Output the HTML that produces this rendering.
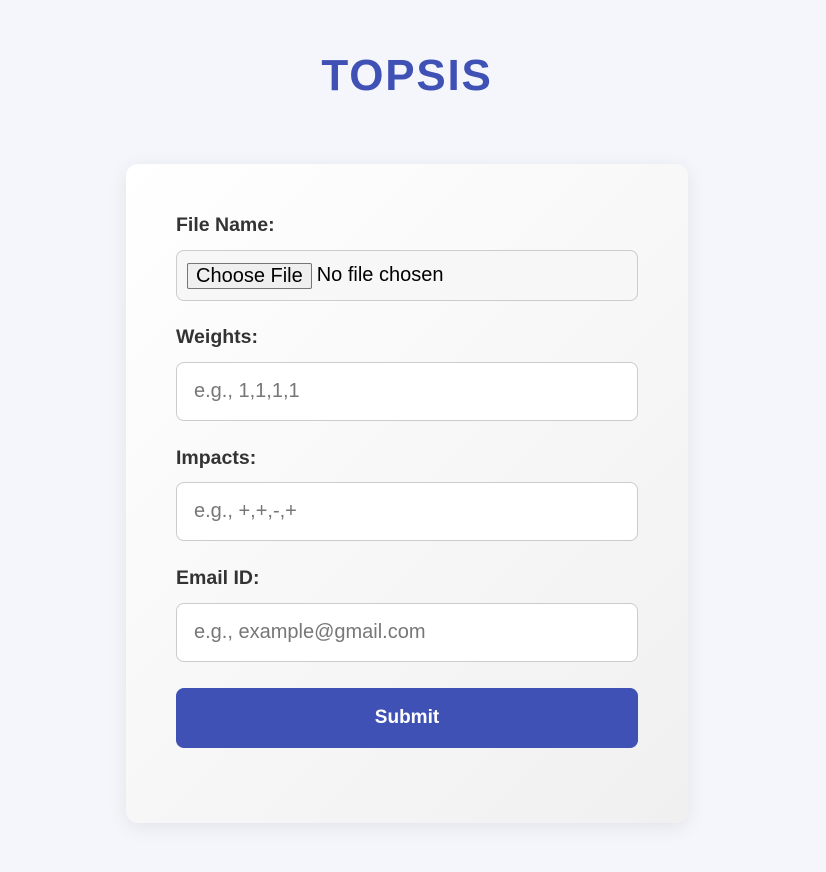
<!DOCTYPE html>
<html><head><meta charset="utf-8"><style>
body{margin:0;width:826px;height:872px;background:#f4f6fb;font-family:"Liberation Sans",Arial,sans-serif;overflow:hidden;position:relative}
h1{position:absolute;top:52px;left:-6px;width:826px;margin:0;text-align:center;color:#3f51b5;font-size:44px;font-weight:bold;letter-spacing:1.8px;line-height:48px}
.card{position:absolute;left:126px;top:164px;width:562px;height:659px;border-radius:12px;background:linear-gradient(135deg,#ffffff,#f0f0f0);box-shadow:0 4px 20px rgba(0,0,0,0.08)}
label{position:absolute;left:50px;font-size:19.5px;font-weight:bold;color:#333}
.in{position:absolute;left:50px;width:462px;height:59px;border:1px solid #ccc;border-radius:8px;background:#fff;box-sizing:border-box;font-size:20px;color:#777;padding-left:17px;line-height:57px}
.file{background:#f7f7f7;height:51px;padding-left:10px;line-height:49px;color:#000}
.btn{display:inline-block;border:1px solid #767676;background:#efefef;border-radius:2px;font-size:20px;line-height:24px;padding:0 8px;vertical-align:middle;margin-right:5px;color:#000}
.sub{position:absolute;left:50px;top:524px;width:462px;height:60px;background:#3f51b5;border-radius:8px;color:#fff;font-weight:bold;font-size:19px;text-align:center;line-height:60px}
</style></head><body>
<h1>TOPSIS</h1>
<div class="card">
<label style="top:50px">File Name:</label>
<div class="in file" style="top:86px"><span class="btn">Choose File</span>No file chosen</div>
<label style="top:162px">Weights:</label>
<div class="in" style="top:198px">e.g., 1,1,1,1</div>
<label style="top:283px">Impacts:</label>
<div class="in" style="top:318px">e.g., +,+,-,+</div>
<label style="top:403px">Email ID:</label>
<div class="in" style="top:439px">e.g., example@gmail.com</div>
<div class="sub">Submit</div>
</div>
</body></html>
